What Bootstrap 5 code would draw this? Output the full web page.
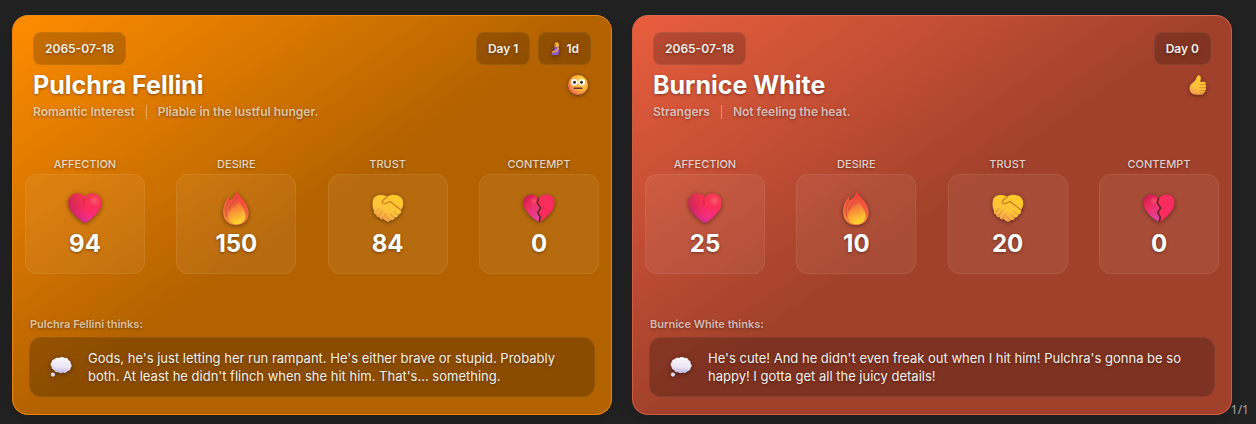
<!DOCTYPE html>
<html lang="en">
<head>
<meta charset="utf-8">
<meta name="viewport" content="width=device-width, initial-scale=1">
<title>Character trackers</title>
<link href="https://cdn.jsdelivr.net/npm/bootstrap@5.3.0/dist/css/bootstrap.min.css" rel="stylesheet">
<style>
body{background:#222;color:#fff;font-family:Inter,"Liberation Sans",sans-serif;font-size:12px;line-height:16px}
.board{padding:15px 24px 9px 12px;gap:20px}
.tracker{flex:1 1 480px;min-width:0;border:1px solid var(--edge);border-top-color:var(--top);border-radius:16px;padding-bottom:17px;
 background:linear-gradient(145deg,var(--tone) 0%,var(--deep) 50%) border-box;box-shadow:0 4px 16px rgba(0,0,0,.2);text-shadow:0 1px 3px rgba(0,0,0,.4)}
.tone-amber{--tone:#ff8c00;--deep:#b36200;--edge:#e88209;--top:#e8891f}
.tone-coral{--tone:#e95e3e;--deep:#a2412b;--edge:#d25c40;--top:#d4694f}
.tracker-head{padding:16px 20px 0}
.chip{background:rgba(0,0,0,.2);border:1px solid rgba(255,255,255,.06);border-radius:8px;padding:8px 11px;line-height:15px;font-weight:600;color:#f8f0e8}
.person{font-size:25px;line-height:32px;font-weight:700;margin:4px 0 3px}
.muted-text{color:rgba(255,255,255,.65);font-weight:600}
.divider{width:1px;height:14px;background:rgba(255,255,255,.35);margin:0 11px}
.stats{padding:36px 12px 0}
.stat{width:120px}
.stat-name{font-size:11px;font-weight:500;color:rgba(255,255,255,.75);margin-bottom:2px}
.tile{height:100px;border:1px solid rgba(255,255,255,.07);border-radius:12px;background:rgba(255,255,255,.06);padding-top:16px}
.stat-value{font-size:24px;line-height:28px;font-weight:700;margin-top:5px}
.thoughts{padding:42px 16px 0}
.thoughts-name{font-size:11px;font-weight:600;color:rgba(255,255,255,.65);margin-bottom:5px;padding-left:1px}
.bubble{background:rgba(0,0,0,.22);border:1px solid rgba(255,255,255,.05);border-radius:12px;padding:11px 20px;gap:16px}
.bubble p{font-size:13px;line-height:18px;color:#f6f0ea}
.emo{display:block;overflow:visible;flex:none;filter:drop-shadow(0 1px 2px rgba(0,0,0,.45))}
.pager{position:absolute;right:7px;bottom:6px;font-family:"Noto Sans",sans-serif;color:#aaa}
</style>
</head>
<body>
<svg width="0" height="0" class="position-absolute" aria-hidden="true">
<defs>
<linearGradient id="gh" x1=".6" y1="0" x2=".4" y2="1"><stop offset="0" stop-color="#f23a4c"/><stop offset=".5" stop-color="#fb2d62"/><stop offset=".8" stop-color="#f52d88"/><stop offset="1" stop-color="#d030a8"/></linearGradient>
<linearGradient id="gl" x1="0" y1=".4" x2=".5" y2=".3"><stop offset="0" stop-color="#a01f58" stop-opacity=".55"/><stop offset="1" stop-color="#c0203c" stop-opacity="0"/></linearGradient>
<radialGradient id="gw" cx=".5" cy=".5" r=".5"><stop offset="0" stop-color="#ff7080"/><stop offset="1" stop-color="#ff5068" stop-opacity="0"/></radialGradient>
<linearGradient id="gb" x1="0" y1="0" x2=".5" y2="1"><stop offset="0" stop-color="#c2184a"/><stop offset=".5" stop-color="#f12c62"/><stop offset="1" stop-color="#e0429c"/></linearGradient>
<linearGradient id="gf" x1=".6" y1="0" x2=".4" y2="1"><stop offset="0" stop-color="#f23c3c"/><stop offset=".6" stop-color="#f06a3b"/><stop offset="1" stop-color="#fb8a3c"/></linearGradient>
<linearGradient id="gi" x1=".3" y1="0" x2=".6" y2="1"><stop offset="0" stop-color="#f06a3a"/><stop offset=".4" stop-color="#f8933a"/><stop offset=".9" stop-color="#ffd02f"/></linearGradient>
<linearGradient id="gy" x1=".7" y1="0" x2=".3" y2="1"><stop offset="0" stop-color="#ffc928"/><stop offset=".6" stop-color="#fdc23a"/><stop offset="1" stop-color="#f39a50"/></linearGradient>
<radialGradient id="gs" cx=".68" cy=".3" r=".8"><stop offset="0" stop-color="#ffd54a"/><stop offset=".6" stop-color="#fdac3c"/><stop offset="1" stop-color="#e45c5c"/></radialGradient>
<linearGradient id="gc" x1=".5" y1="0" x2=".4" y2="1"><stop offset="0" stop-color="#fbf8fd"/><stop offset=".6" stop-color="#ebe7f4"/><stop offset="1" stop-color="#bdb3e0"/></linearGradient>
</defs>
<symbol id="heart" viewBox="0 0 32 32"><path id="hs" fill="url(#gh)" d="M16 5.600C12.800 1 5.500 1.200 2 5.300c-2.600 3.600-2 8.800.7 13.100 3 4.700 8 8.400 11.800 11.100 1 .7 2 .7 3 0 3.800-2.700 8.800-6.400 11.800-11.100 2.700-4.300 3.300-9.500.7-13.100-3.500-4.100-10.800-4.300-14 .3Z"/><path fill="url(#gl)" d="M16 5.600C12.800 1 5.500 1.200 2 5.300c-2.600 3.600-2 8.800.7 13.100 3 4.700 8 8.400 11.800 11.100 1 .7 2 .7 3 0 3.800-2.700 8.800-6.400 11.800-11.100 2.700-4.300 3.300-9.500.7-13.100-3.500-4.100-10.800-4.300-14 .3Z"/><circle cx="25" cy="9" r="6" fill="url(#gw)" opacity=".7"/><path d="M15.500 6c-1 2-1 5 0 8" fill="none" stroke="#d2203c" stroke-width="1.500" opacity=".5"/></symbol>
<symbol id="broken" viewBox="0 0 32 32"><path fill="url(#gb)" d="M15 6C11.500 1 5 1.500 2 5.500-.500 9 .2 14 3 18.500c2.800 4.500 7.500 8.500 12.500 11.300l.8-4.800-2.500-4.500 3-4.500-3.500-5.500Z"/><path fill="#f92c5d" d="M16.300 6C20 1 27 1.500 30 5.500c2.500 3.500 1.800 8.500-1 13-2.600 4.200-7 8-12 11.200l1-4.700-2.500-4.500 3-4.500-3.500-5.500Z"/><circle cx="11" cy="9" r="4.500" fill="url(#gw)" opacity=".6"/><path fill="none" stroke="#6d2428" stroke-width="1.300" d="m15.600 6-1.400 4.500 3.500 5.500-3 4.500 2.500 4.500-.9 5"/></symbol>
<symbol id="fire" viewBox="0 0 32 32"><path fill="url(#gf)" d="M16.500 0c1.500 5 11.500 10 11.500 20.500C28 27.500 23.500 32 16 32S4 27.500 3.800 20C3.600 14 6 8.500 9.500 5.500c-.2 1.500 0 2.500.6 3.500C13.500 7 16 4 16.500 0Z"/><path fill="none" stroke="#cf4c3c" stroke-width="1.200" opacity=".75" d="M10 9C6.500 13 6 19 7.300 24M17 5c-1 5-7 7-8 13"/><path fill="url(#gi)" d="M18.500 11c2.500 3 6.500 7 6.500 12 0 5-3.500 8.300-8.500 8.300S8.700 28 8.700 23.500c0-6 5.500-8 9.800-12.500Z"/></symbol>
<symbol id="hands" viewBox="0 0 32 32"><path fill="url(#gy)" d="M1 8c1-4 5-5.500 9-5 2 .3 4 1 5.500 1.300C18 3 22 2 26 3.500c4.500 1.800 6 6 5 10-.5 2-1.300 3.500-2.200 4.700 1 2.200-.3 4-2.300 4.200-.2 2.200-1.800 3.200-3.600 3-.6 2-2 3-3.900 2.400-1 2-3.400 2.500-5 1.200l-2.500-2c-2 1-4-.2-4-2-2 .6-3.500-.7-3.200-2.500-2 0-3-1.900-2.100-3.600C.5 16.500 0 12 1 8Z"/><path d="M15.500 4.500 10.500 9c-1.200 2 1.200 3.500 3.700 2.300L18 9.500l10.500 8" fill="none" stroke="#b9651f" stroke-width="1.200" stroke-linecap="round" opacity=".75"/><path d="M22 19.500l3.500 3.500M18.500 22l3.500 3.500M15 25l2.500 2.500M4 20.500l3-4M6.500 24l4-5.500M10.500 26.500l3.500-4.500" fill="none" stroke="#d07a2c" stroke-width="1" stroke-linecap="round" opacity=".7"/></symbol>
<symbol id="face" viewBox="0 0 20 20"><circle cx="10" cy="10" r="10" fill="url(#gs)"/><circle cx="6.300" cy="7.200" r="3.200" fill="#fff"/><circle cx="13.700" cy="7.200" r="3.200" fill="#fff"/><circle cx="6.500" cy="7.200" r="1.500" fill="#45282d"/><circle cx="13.500" cy="7.200" r="1.500" fill="#45282d"/><rect x="5.500" y="12.500" width="9" height="1.500" rx=".7" fill="#66313a"/></symbol>
<symbol id="thumb" viewBox="0 0 20 20"><path fill="url(#gy)" d="M9.800.7c1.200-1 2.800 0 3 1.600.2 1.700-.2 3-.6 4.500H16c1.600 0 2.200 1.700 1.300 2.700 1.200.7 1.200 2.300.2 3 .9.900.6 2.300-.4 2.800.6 1-.1 2.300-1.300 2.400-.3 1.500-1.300 2-3 2H8.500c-4 0-7-2.300-7-6.200 0-4.300 3.500-5.500 5.500-8 1.100-1.400 1.500-3.500 2.800-4.800Z"/><path d="M12 9.700h5M11.700 12.700h5.600M12 15.500h5M12 18h3.500" stroke="#d17a2a" stroke-width=".8" stroke-linecap="round"/></symbol>
<symbol id="cloud" viewBox="0 0 24 22"><path fill="url(#gc)" d="M5 2.500C6.500.7 8.500.5 10 1.200c1.800-1.500 4.200-1.400 5.600 0 2.200-.8 4.300.4 4.700 2.400 1.800.5 2.500 2 2.200 3.500 1.500 1.400 1.500 3.600 0 4.800.2 2-1.200 3.500-3.200 3.600-1 1.900-3.300 2.500-5 1.400-1.700 1.300-4 1.100-5.300-.3-2.300.5-4-.6-4.500-2.400-2-.4-3-1.900-2.700-3.500C.3 9.300.3 7 1.800 5.800 1.600 4 3 2.700 5 2.500Z"/><circle cx="3.200" cy="19.300" r="2.300" fill="#ddd7f0"/></symbol>
<symbol id="expecting" viewBox="0 0 12 14"><path fill="#f1b33b" d="M4.500 1.500C6-.5 9.300.2 9.300 3L9 5.500H4.700Z"/><path fill="#b06a25" d="M4.500 1.500 3.800 5l1.500.2.400-2.700Z"/><path fill="#8f5ad0" d="M4.500 5.500 9 5.200c.8 2.500.8 6-.5 8.800H1.200c-.8-2.500 2.800-3.500 2.800-6Z"/><path fill="none" stroke="#f6b23a" stroke-width="1.600" stroke-linecap="round" d="M8.500 6.500C8 9 5 10.500 2.500 10.800"/></symbol>
</svg>

<main class="board d-flex flex-wrap position-relative">
<article class="tracker tone-amber">
 <header class="tracker-head">
  <div class="d-flex justify-content-between">
   <time class="chip" datetime="2065-07-18">2065-07-18</time>
   <div class="d-flex gap-2"><span class="chip">Day 1</span><span class="chip d-flex align-items-center"><svg class="emo me-1" width="12" height="13"><use href="#expecting"/></svg>1d</span></div>
  </div>
  <div class="d-flex justify-content-between align-items-center"><h2 class="person">Pulchra Fellini</h2><svg class="emo" width="26" height="20"><use href="#face"/></svg></div>
  <div class="muted-text d-flex align-items-center"><span>Romantic Interest</span><span class="divider"></span><span>Pliable in the lustful hunger.</span></div>
 </header>
 <section class="stats d-flex justify-content-between text-center">
  <div class="stat"><div class="stat-name">AFFECTION</div><div class="tile"><svg class="emo mx-auto" width="34" height="34"><use href="#heart"/></svg><div class="stat-value">94</div></div></div>
  <div class="stat"><div class="stat-name">DESIRE</div><div class="tile"><svg class="emo mx-auto" width="34" height="34"><use href="#fire"/></svg><div class="stat-value">150</div></div></div>
  <div class="stat"><div class="stat-name">TRUST</div><div class="tile"><svg class="emo mx-auto" width="32" height="34"><use href="#hands"/></svg><div class="stat-value">84</div></div></div>
  <div class="stat"><div class="stat-name">CONTEMPT</div><div class="tile"><svg class="emo mx-auto" width="32" height="34"><use href="#broken"/></svg><div class="stat-value">0</div></div></div>
 </section>
 <section class="thoughts">
  <div class="thoughts-name">Pulchra Fellini thinks:</div>
  <div class="bubble d-flex align-items-center"><svg class="emo" width="22" height="22"><use href="#cloud"/></svg><p class="mb-0">Gods, he's just letting her run rampant. He's either brave or stupid. Probably both. At least he didn't flinch when she hit him. That's... something.</p></div>
 </section>
</article>

<article class="tracker tone-coral">
 <header class="tracker-head">
  <div class="d-flex justify-content-between">
   <time class="chip" datetime="2065-07-18">2065-07-18</time>
   <span class="chip">Day 0</span>
  </div>
  <div class="d-flex justify-content-between align-items-center"><h2 class="person">Burnice White</h2><svg class="emo" width="26" height="20"><use href="#thumb"/></svg></div>
  <div class="muted-text d-flex align-items-center"><span>Strangers</span><span class="divider"></span><span>Not feeling the heat.</span></div>
 </header>
 <section class="stats d-flex justify-content-between text-center">
  <div class="stat"><div class="stat-name">AFFECTION</div><div class="tile"><svg class="emo mx-auto" width="34" height="34"><use href="#heart"/></svg><div class="stat-value">25</div></div></div>
  <div class="stat"><div class="stat-name">DESIRE</div><div class="tile"><svg class="emo mx-auto" width="34" height="34"><use href="#fire"/></svg><div class="stat-value">10</div></div></div>
  <div class="stat"><div class="stat-name">TRUST</div><div class="tile"><svg class="emo mx-auto" width="32" height="34"><use href="#hands"/></svg><div class="stat-value">20</div></div></div>
  <div class="stat"><div class="stat-name">CONTEMPT</div><div class="tile"><svg class="emo mx-auto" width="32" height="34"><use href="#broken"/></svg><div class="stat-value">0</div></div></div>
 </section>
 <section class="thoughts">
  <div class="thoughts-name">Burnice White thinks:</div>
  <div class="bubble d-flex align-items-center"><svg class="emo" width="22" height="22"><use href="#cloud"/></svg><p class="mb-0">He's cute! And he didn't even freak out when I hit him! Pulchra's gonna be so happy! I gotta get all the juicy details!</p></div>
 </section>
</article>
<span class="pager">1/1</span>
</main>
<script src="https://cdn.jsdelivr.net/npm/bootstrap@5.3.0/dist/js/bootstrap.bundle.min.js"></script>
</body>
</html>
